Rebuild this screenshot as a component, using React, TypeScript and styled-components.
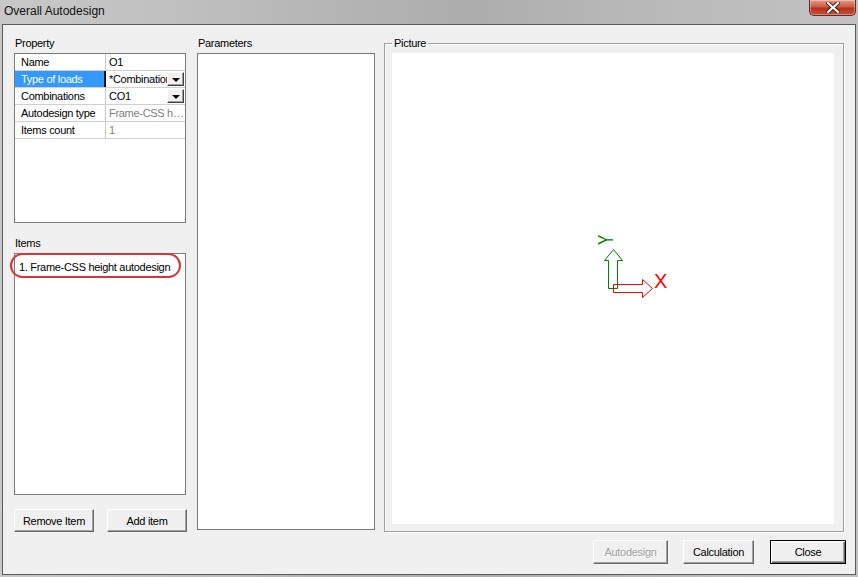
import React from "react";
import styled, { createGlobalStyle } from "styled-components";

const Global = createGlobalStyle`
  html, body { margin: 0; padding: 0; }
  body {
    font-family: "Liberation Sans", Arial, sans-serif;
    font-size: 11px;
    letter-spacing: -0.3px;
    color: #000;
    background: #b8b8b8;
  }
  * { box-sizing: border-box; }
`;

const Win = styled.div`
  width: 858px;
  height: 577px;
  display: flex;
  flex-direction: column;
  background: linear-gradient(
    to right,
    #c8c8c8 0%,
    #c0c0c0 20%,
    #b4b4b4 40%,
    #adadad 55%,
    #b9b9b9 75%,
    #c2c2c2 100%
  );
  overflow: hidden;
`;

const TitleBar = styled.div`
  height: 24px;
  display: flex;
  align-items: flex-start;
  flex-shrink: 0;
`;

const Title = styled.div`
  font-family: "Liberation Sans", Arial, sans-serif;
  font-size: 12px;
  letter-spacing: 0;
  color: #111;
  padding: 4px 0 0 4px;
  line-height: 14px;
`;

const CloseBox = styled.div`
  margin-left: auto;
  margin-right: 2px;
  width: 47px;
  height: 16px;
  border: 1px solid #5e2a22;
  border-top: none;
  border-radius: 0 0 5px 5px;
  background: linear-gradient(to bottom, #e19a88 0%, #cf5a45 45%, #b8321d 55%, #c8503a 100%);
  display: flex;
  align-items: center;
  justify-content: center;
  box-shadow: inset 0 0 0 1px rgba(255, 255, 255, 0.35);
`;

const Frame = styled.div`
  flex: 1;
  display: flex;
  padding: 0 2px 2px 2px;
`;

const Client = styled.div`
  flex: 1;
  display: flex;
  flex-direction: column;
  border: 1px solid #5a5a5a;
  background: #f0f0f0;
  padding: 8px 9px 10px 11px;
`;

const Top = styled.div`
  display: flex;
  height: 499px;
`;

const Column = styled.div<{ $w: number; $ml?: number }>`
  width: ${(p) => p.$w}px;
  margin-left: ${(p) => p.$ml ?? 0}px;
  display: flex;
  flex-direction: column;
`;

const Label = styled.div<{ $pt?: number }>`
  height: ${(p) => 20 + (p.$pt ?? 0)}px;
  padding-top: ${(p) => p.$pt ?? 0}px;
  line-height: 20px;
  padding-left: 1px;
`;

const WhiteBox = styled.div<{ $h: number; $w?: number }>`
  height: ${(p) => p.$h}px;
  width: ${(p) => (p.$w ? `${p.$w}px` : "100%")};
  border: 1px solid #7a7a7a;
  background: #fff;
  position: relative;
`;

const PropRow = styled.div`
  display: grid;
  grid-template-columns: 91px 1fr;
  height: 17px;
  border-bottom: 1px solid #d0d0d0;
`;

const KeyCell = styled.div<{ $sel?: boolean }>`
  padding-left: 6px;
  line-height: 16px;
  white-space: nowrap;
  overflow: hidden;
  background: ${(p) => (p.$sel ? "#3399ff" : "#fff")};
  color: ${(p) => (p.$sel ? "#fff" : "#000")};
  border-right: 1px solid ${(p) => (p.$sel ? "#000" : "#c8c8c8")};
  box-shadow: ${(p) => (p.$sel ? "inset -1px 0 0 #1a1a1a" : "none")};
`;

const ValueCell = styled.div`
  display: flex;
  align-items: center;
  padding-left: 3px;
  overflow: hidden;
`;

const ValueText = styled.span<{ $muted?: boolean; $ellipsis?: boolean }>`
  flex: 1;
  min-width: 0;
  white-space: nowrap;
  overflow: hidden;
  line-height: 16px;
  text-overflow: ${(p) => (p.$ellipsis ? "ellipsis" : "clip")};
  color: ${(p) => (p.$muted ? "#808080" : "#000")};
`;

const DropBtn = styled.div`
  flex-shrink: 0;
  width: 17px;
  height: 14px;
  margin-right: 1px;
  background: #f0f0f0;
  border: 1px solid;
  border-color: #ffffff #404040 #404040 #ffffff;
  box-shadow: inset -1px -1px 0 #a0a0a0;
  display: flex;
  align-items: center;
  justify-content: center;
  &::after {
    content: "";
    border-left: 4px solid transparent;
    border-right: 4px solid transparent;
    border-top: 4px solid #000;
    margin-top: 1px;
  }
`;

const ListItem = styled.div`
  padding: 6px 4px 0 4px;
  line-height: 14px;
  white-space: nowrap;
`;

const Highlight = styled.div`
  position: absolute;
  left: -5px;
  top: -1px;
  width: 171px;
  height: 25px;
  border: 2px solid #d9343a;
  border-radius: 13px;
  pointer-events: none;
`;

const ButtonRow = styled.div<{ $mt: number; $end?: boolean; $gap?: number }>`
  margin-top: ${(p) => p.$mt}px;
  display: flex;
  justify-content: ${(p) => (p.$end ? "flex-end" : "space-between")};
  gap: ${(p) => p.$gap ?? 0}px;
`;

const Button = styled.div<{ $w: number; $h: number; $disabled?: boolean; $default?: boolean }>`
  width: ${(p) => p.$w}px;
  height: ${(p) => p.$h}px;
  display: flex;
  align-items: center;
  justify-content: center;
  background: #f0f0f0;
  font-size: 11px;
  color: ${(p) => (p.$disabled ? "#a0a0a0" : "#000")};
  text-shadow: ${(p) => (p.$disabled ? "1px 1px 0 #fff" : "none")};
  border: 1px solid;
  border-color: ${(p) => (p.$default ? "#000" : "#ffffff #6a6a6a #6a6a6a #ffffff")};
  box-shadow: ${(p) =>
    p.$default
      ? "inset 1px 1px 0 #fff, inset -1px -1px 0 #6a6a6a, inset -2px -2px 0 #a0a0a0"
      : "inset -1px -1px 0 #a0a0a0"};
`;

const Group = styled.div`
  margin-left: 9px;
  margin-top: 10px;
  width: 460px;
  height: 489px;
  position: relative;
  border: 1px solid #a0a0a0;
  box-shadow: inset 1px 1px 0 #fff, 1px 1px 0 #fff;
  padding: 9px 9px 7px 7px;
`;

const Legend = styled.div`
  position: absolute;
  top: -9px;
  left: 7px;
  padding: 0 2px;
  background: #f0f0f0;
  line-height: 16px;
`;

const Canvas = styled.div`
  height: 100%;
  background: #fff;
  position: relative;
`;

const AxisSvg = styled.svg`
  position: absolute;
  left: 198px;
  top: 172px;
`;

type Row = { k: string; v: string; sel?: boolean; drop?: boolean; muted?: boolean; ellipsis?: boolean };

const rows: Row[] = [
  { k: "Name", v: "O1" },
  { k: "Type of loads", v: "*Combinations", sel: true, drop: true },
  { k: "Combinations", v: "CO1", drop: true },
  { k: "Autodesign type", v: "Frame-CSS height autodesign", muted: true, ellipsis: true },
  { k: "Items count", v: "1", muted: true },
];

export default function App() {
  return (
    <>
      <Global />
      <Win>
        <TitleBar>
          <Title>Overall Autodesign</Title>
          <CloseBox>
            <svg width="14" height="11" viewBox="0 0 14 11">
              <path d="M2 1 L12 10 M12 1 L2 10" stroke="#4a1a12" strokeWidth="4" strokeLinecap="square" />
              <path d="M2 1 L12 10 M12 1 L2 10" stroke="#fff" strokeWidth="2.2" strokeLinecap="square" />
            </svg>
          </CloseBox>
        </TitleBar>
        <Frame>
          <Client>
            <Top>
              <Column $w={173}>
                <Label>Property</Label>
                <WhiteBox $h={170} $w={172}>
                  {rows.map((r) => (
                    <PropRow key={r.k}>
                      <KeyCell $sel={r.sel}>{r.k}</KeyCell>
                      <ValueCell>
                        <ValueText $muted={r.muted} $ellipsis={r.ellipsis}>
                          {r.v}
                        </ValueText>
                        {r.drop && <DropBtn />}
                      </ValueCell>
                    </PropRow>
                  ))}
                </WhiteBox>
                <Label $pt={10}>Items</Label>
                <WhiteBox $h={242} $w={172}>
                  <ListItem>1. Frame-CSS height autodesign</ListItem>
                  <Highlight />
                </WhiteBox>
                <ButtonRow $mt={14}>
                  <Button $w={80} $h={23}>Remove Item</Button>
                  <Button $w={80} $h={23}>Add item</Button>
                </ButtonRow>
              </Column>
              <Column $w={178} $ml={10}>
                <Label>Parameters</Label>
                <WhiteBox $h={477} />
              </Column>
              <Group>
                <Legend>Picture</Legend>
                <Canvas>
                  <AxisSvg width="80" height="80" viewBox="0 0 80 80">
                    <text
                      transform="translate(15 15) rotate(-90) scale(0.7 1)"
                      textAnchor="middle"
                      dominantBaseline="central"
                      fontFamily="Liberation Sans, Arial, sans-serif"
                      fontSize="22"
                      fill="#008000"
                    >
                      Y
                    </text>
                    <polygon
                      points="23.5,24.5 32.5,35.5 27.5,35.5 27.5,63.5 18.5,63.5 18.5,35.5 14.5,35.5"
                      fill="none"
                      stroke="#008000"
                      strokeWidth="1"
                    />
                    <polygon
                      points="23.5,59.5 52.5,59.5 52.5,54.5 62.5,63.5 52.5,72.5 52.5,67.5 23.5,67.5"
                      fill="none"
                      stroke="#ff0000"
                      strokeWidth="1"
                    />
                    <text
                      x="64"
                      y="63"
                      fontFamily="Liberation Sans, Arial, sans-serif"
                      fontSize="20"
                      fill="#ff0000"
                    >
                      X
                    </text>
                  </AxisSvg>
                </Canvas>
              </Group>
            </Top>
            <ButtonRow $mt={8} $end $gap={15}>
              <Button $w={75} $h={24} $disabled>Autodesign</Button>
              <Button $w={71} $h={24}>Calculation</Button>
              <Button $w={76} $h={24} $default style={{ marginLeft: 1 }}>Close</Button>
            </ButtonRow>
          </Client>
        </Frame>
      </Win>
    </>
  );
}
